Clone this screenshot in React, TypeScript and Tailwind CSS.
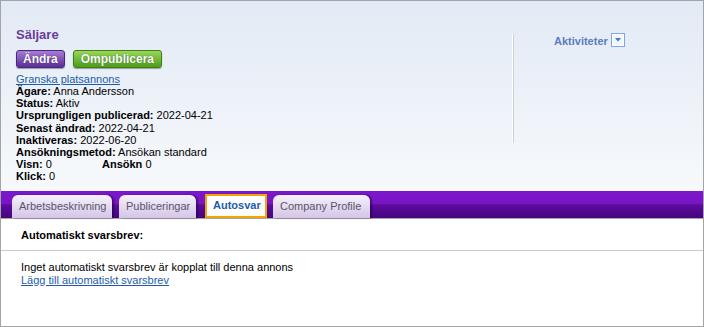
const font = "font-['Liberation_Sans',Arial,sans-serif]";

function InfoLine({ label, value }: { label: string; value: string }) {
  return (
    <div>
      <span className="font-bold">{label}</span> {value}
    </div>
  );
}

function Tab({ label, width, active }: { label: string; width: string; active?: boolean }) {
  if (active) {
    return (
      <div
        className={`${width} h-[24px] border-2 border-[#f5a400] bg-white pl-[6px] pt-[3px] text-[11px] leading-[13px] font-bold text-[#1b5cad]`}
      >
        {label}
      </div>
    );
  }
  return (
    <div
      className={`${width} h-[23px] rounded-t-[6px] bg-linear-to-b from-[#f6f1fb] to-[#d5c5e6] pl-[7px] pt-[5px] text-[11px] leading-[13px] text-[#58566a] shadow-[2px_0_2px_rgba(30,0,60,0.55)]`}
    >
      {label}
    </div>
  );
}

export default function App() {
  return (
    <div
      className={`${font} w-[704px] h-[327px] overflow-hidden border border-[#a4a4a4] bg-white flex flex-col text-black`}
    >
      {/* header */}
      <div className="h-[190px] shrink-0 bg-linear-to-b from-[#e2eaf5] to-[#f7f9fc] flex pt-[26px]">
        <div className="w-[511px] pl-[15px]">
          <div className="text-[13px] leading-[16px] font-bold text-[#6a3c9c]">Säljare</div>
          <div className="mt-[7px] flex gap-[8px]">
            <button className="h-[18px] rounded-[3px] border border-[#4b2681] bg-linear-to-b from-[#a77dd8] to-[#5c2d94] px-[6px] text-[12px] leading-[16px] font-bold text-white shadow-[0_1px_1px_rgba(0,0,0,0.35)] [text-shadow:0_0_1px_#2a1050]">
              Ändra
            </button>
            <button className="h-[18px] rounded-[3px] border border-[#3f7f12] bg-linear-to-b from-[#98d85a] to-[#4d9b18] px-[7px] text-[12px] leading-[16px] font-bold text-white shadow-[0_1px_1px_rgba(0,0,0,0.35)] [text-shadow:0_0_1px_#245008]">
              Ompublicera
            </button>
          </div>
          <div className="mt-[5px] text-[11px] leading-[12.15px]">
            <a href="#" className="text-[#1d5cab] underline">
              Granska platsannons
            </a>
            <InfoLine label="Ägare:" value="Anna Andersson" />
            <InfoLine label="Status:" value="Aktiv" />
            <InfoLine label="Ursprungligen publicerad:" value="2022-04-21" />
            <InfoLine label="Senast ändrad:" value="2022-04-21" />
            <InfoLine label="Inaktiveras:" value="2022-06-20" />
            <InfoLine label="Ansökningsmetod:" value="Ansökan standard" />
            <div className="flex">
              <div className="w-[86px]">
                <span className="font-bold">Visn:</span> 0
              </div>
              <div>
                <span className="font-bold">Ansökn</span> 0
              </div>
            </div>
            <InfoLine label="Klick:" value="0" />
          </div>
        </div>

        <div className="mt-[7px] h-[109px] w-[2px] border-l border-white bg-[#cdd1d8]" />

        <div className="mt-[6px] flex h-[14px] items-center gap-[3px] pl-[40px] self-start">
          <span className="text-[11px] leading-[13px] font-bold text-[#5a7dbf] mt-[2px]">Aktiviteter</span>
          <svg width="14" height="14" viewBox="0 0 14 14">
            <rect x="0.5" y="0.5" width="13" height="13" fill="#ffffff" stroke="#7ea6e6" />
            <rect x="2" y="2" width="10" height="10" fill="#f2f6fd" />
            <polygon points="4,5 10,5 7,8.5" fill="#3b79d8" />
          </svg>
        </div>
      </div>

      {/* tab band */}
      <div className="h-[28px] shrink-0 border-b border-[#a7a7a7] bg-[linear-gradient(to_bottom,#7b19ca_0%,#7816c6_46%,#5c0b9e_52%,#46067e_100%)] flex items-end pl-[11px]">
        <div className="mr-[7px]">
          <Tab label="Arbetsbeskrivning" width="w-[100px]" />
        </div>
        <div className="mr-[9px]">
          <Tab label="Publiceringar" width="w-[77px]" />
        </div>
        <div className="mr-[6px]">
          <Tab label="Autosvar" width="w-[62px]" active />
        </div>
        <Tab label="Company Profile" width="w-[97px]" />
      </div>

      {/* content */}
      <div className="h-[32px] shrink-0 border-b border-[#c9c9c9] pl-[20px] pt-[10px] text-[11px] leading-[13px] font-bold">
        Automatiskt svarsbrev:
      </div>
      <div className="pl-[20px] pt-[10px] text-[11px] leading-[12.6px]">
        <div>Inget automatiskt svarsbrev är kopplat till denna annons</div>
        <a href="#" className="text-[#1d5cab] underline">
          Lägg till automatiskt svarsbrev
        </a>
      </div>
    </div>
  );
}
